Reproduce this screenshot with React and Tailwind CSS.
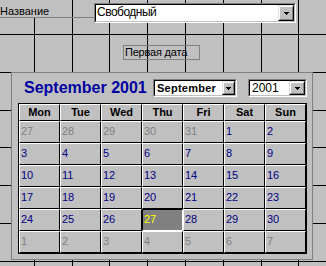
import React from "react";

const gridX = [34, 72, 109, 147, 185, 223, 261, 298];
const gridY = [34, 72, 110, 147, 185, 223, 261];

const weekDays = ["Mon", "Tue", "Wed", "Thu", "Fri", "Sat", "Sun"];

// August tail, September 2001, October head (Monday first)
const days = [
  ...[27, 28, 29, 30, 31].map((d) => ({ d, other: true })),
  ...Array.from({ length: 30 }, (_, i) => ({ d: i + 1, other: false })),
  ...[1, 2, 3, 4, 5, 6, 7].map((d) => ({ d, other: true })),
];

const Arrow = () => (
  <svg width="5" height="3" shapeRendering="crispEdges">
    <rect x="0" y="0" width="5" height="1" fill="#000" />
    <rect x="1" y="1" width="3" height="1" fill="#000" />
    <rect x="2" y="2" width="1" height="1" fill="#000" />
  </svg>
);

const DropButton = ({ className }) => (
  <div className={`h-full shrink-0 border border-t-[#dfdfdf] border-l-[#dfdfdf] border-r-black border-b-black ${className}`}>
    <div className="flex h-full items-center justify-center border border-t-white border-l-white border-r-[#808080] border-b-[#808080] bg-[#c0c0c0]">
      <Arrow />
    </div>
  </div>
);

// Win95 style sunken box
const Sunken = ({ className, children }) => (
  <div className={`border border-t-[#808080] border-l-[#808080] border-r-white border-b-white ${className}`}>
    <div className="flex h-full border border-t-black border-l-black border-r-[#c0c0c0] border-b-[#c0c0c0] bg-white">
      {children}
    </div>
  </div>
);

export default function App() {
  return (
    <div className="relative h-[266px] w-[326px] overflow-hidden bg-[#c0c0c0] font-['Liberation_Sans',Arial,sans-serif] text-black">
      {/* design grid */}
      <svg className="pointer-events-none absolute inset-0" width="326" height="266" shapeRendering="crispEdges">
        {gridX.map((x) => (
          <rect key={"x" + x} x={x} y="0" width="1" height="266" fill="#000" />
        ))}
        {gridY.map((y) => (
          <rect key={"y" + y} x="0" y={y} width="326" height="1" fill="#000" />
        ))}
      </svg>

      <div className="relative flex flex-col">
        {/* top row */}
        <div className="flex items-start">
          <div className="h-[18px] w-[56px] border-b border-[#808080] bg-[#c0c0c0] pt-[6px] text-[11px] leading-[11px]">
            Название
          </div>
          <div className="h-[18px] w-[38px] border-b border-[#808080]" />
          <Sunken className="mt-[3px] h-[20px] w-[202px]">
            <div className="flex-1 pl-[1px] text-[12px] leading-[14px] tracking-[-0.5px]">Свободный</div>
            <DropButton className="w-[16px]" />
          </Sunken>
        </div>

        <div className="ml-[123px] mt-[22px] h-[15px] w-[77px] border border-[#808080] pl-[1px] text-[11px] leading-[12px] tracking-[-0.2px]">
          Первая дата
        </div>

        {/* calendar panel */}
        <div className="ml-[11px] mt-[12px] flex h-[188px] w-[302px] flex-col border border-[#808080] bg-[#c0c0c0] pt-[6px]">
          <div className="flex h-[18px] items-center">
            <div className="w-[141px] pl-[12px] text-[16px] font-bold text-[#0000a0]">September 2001</div>
            <Sunken className="h-[18px] w-[84px]">
              <div className="flex-1 pl-[2px] text-[11px] font-bold leading-[14px] tracking-[0.25px]">September</div>
              <DropButton className="w-[13px]" />
            </Sunken>
            <Sunken className="ml-[11px] h-[18px] w-[59px]">
              <div className="flex-1 pl-[2px] text-[12px] leading-[14px]">2001</div>
              <DropButton className="w-[16px]" />
            </Sunken>
          </div>

          <div className="ml-[6px] mt-[6px] grid w-[289px] grid-cols-[repeat(7,41px)] border border-black">
            {weekDays.map((w) => (
              <div
                key={w}
                className="flex h-[17px] items-center justify-center border border-t-white border-l-white border-r-black border-b-black text-[11px] font-bold"
              >
                {w}
              </div>
            ))}
            {days.map((c, i) => {
              const sel = !c.other && c.d === 27;
              return (
                <div
                  key={i}
                  className={
                    sel
                      ? "h-[22px] border border-t-black border-l-black border-r-white border-b-white bg-[#808080] pl-[1px] pt-[3px] text-[11px] leading-[12px] text-[#ffff00]"
                      : c.other
                      ? "h-[22px] border border-t-white border-l-white border-r-black border-b-black pl-[1px] pt-[3px] text-[11px] leading-[12px] text-[#808080]"
                      : "h-[22px] border border-t-white border-l-white border-r-black border-b-black pl-[1px] pt-[3px] text-[11px] leading-[12px] text-[#000080]"
                  }
                >
                  {c.d}
                </div>
              );
            })}
          </div>
        </div>
      </div>
    </div>
  );
}
